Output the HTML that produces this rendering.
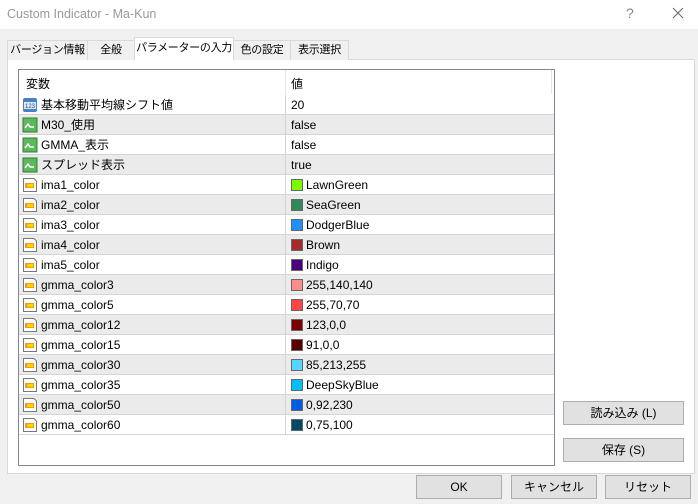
<!DOCTYPE html><html><head><meta charset="utf-8"><style>
*{margin:0;padding:0;box-sizing:border-box}
body{width:698px;height:504px;background:#f0f0f0;position:relative;overflow:hidden;font-family:"Liberation Sans","Noto Sans CJK JP",sans-serif;font-size:12px;color:#000}
.title{position:absolute;left:0;top:0;width:698px;height:29px;background:#fff}
.title span{position:absolute;left:7px;top:7px;color:#999;font-size:12.5px}
.abs{position:absolute}
.tab{position:absolute;top:40px;height:20px;background:#f0f0f0;border:1px solid #d9d9d9;border-bottom:none;font-size:11px;text-align:center;line-height:18px;white-space:nowrap;overflow:hidden;letter-spacing:-0.3px}
.panel{position:absolute;left:7px;top:59px;width:688px;height:415px;background:#fff;border:1px solid #d9d9d9}
.list{position:absolute;left:18px;top:69px;width:537px;height:397px;border:1px solid #828790;background:#fff;overflow:hidden}
.row{position:absolute;left:0;width:535px;height:20px;border-bottom:1px solid #d4d4d4;line-height:20px;white-space:nowrap}
.row.g{background:#ebebeb}
.row .n{position:absolute;left:22px;top:0;height:20px;line-height:20px}
.row .v{position:absolute;left:272px;top:0;line-height:20px}
.row .d{position:absolute;left:266px;top:0;width:1px;height:20px;background:#d4d4d4}
.sw{position:absolute;left:272px;top:4px;width:12px;height:12px;border:1px solid #666}
.row .vc{position:absolute;left:287px;top:0;line-height:20px}
.ic{position:absolute;left:3px;top:2px;width:16px;height:16px}
.btn{position:absolute;background:#e1e1e1;border:1px solid #adadad;text-align:center;line-height:22px;font-size:12px;white-space:nowrap}
</style></head><body>
<div class="title"><span>Custom Indicator - Ma-Kun</span>
<span style="left:626px;top:5px;color:#888;font-size:14px">?</span>
<svg class="abs" style="left:672px;top:7px" width="12" height="12"><path d="M1 1L11 11M11 1L1 11" stroke="#666" stroke-width="1"/></svg></div>
<div class="panel"></div>
<div class="tab" style="left:7px;width:81px">バージョン情報</div>
<div class="tab" style="left:87px;width:48px">全般</div>
<div class="tab" style="left:134px;top:37px;height:23px;width:100px;background:#fff;line-height:20px;z-index:2">パラメーターの入力</div>
<div class="tab" style="left:233px;width:58px">色の設定</div>
<div class="tab" style="left:290px;width:59px">表示選択</div>
<div class="list">
<div class="row" style="top:0;height:25px;border:none;line-height:25px"><span class="abs" style="left:7px;top:2px">変数</span><span class="abs" style="left:272px;top:2px">値</span><div class="abs" style="left:266px;top:0;width:1px;height:25px;background:#e5e5e5"></div><div class="abs" style="left:532px;top:0;width:1px;height:24px;background:#e5e5e5"></div></div>
<div id="rows"></div>
</div>
<div class="btn" style="left:563px;top:401px;width:121px;height:24px">読み込み (L)</div>
<div class="btn" style="left:563px;top:438px;width:121px;height:24px">保存 (S)</div>
<div class="btn" style="left:416px;top:475px;width:86px;height:24px">OK</div>
<div class="btn" style="left:511px;top:475px;width:86px;height:24px">キャンセル</div>
<div class="btn" style="left:605px;top:475px;width:86px;height:24px">リセット</div>
<script>
var R=[["n","基本移動平均線シフト値","20"],["b","M30_使用","false"],["b","GMMA_表示","false"],["b","スプレッド表示","true"],
["c","ima1_color","LawnGreen","#7cfc00"],["c","ima2_color","SeaGreen","#2e8b57"],["c","ima3_color","DodgerBlue","#1e90ff"],["c","ima4_color","Brown","#a52a2a"],["c","ima5_color","Indigo","#4b0082"],
["c","gmma_color3","255,140,140","#ff8c8c"],["c","gmma_color5","255,70,70","#ff4646"],["c","gmma_color12","123,0,0","#7b0000"],["c","gmma_color15","91,0,0","#5b0000"],["c","gmma_color30","85,213,255","#55d5ff"],["c","gmma_color35","DeepSkyBlue","#00bfff"],["c","gmma_color50","0,92,230","#005ce6"],["c","gmma_color60","0,75,100","#004b64"]];
var ic={n:'<svg class="ic" viewBox="0 0 16 16"><rect x="1" y="1" width="14" height="14" rx="2" fill="#4a7fc1"/><rect x="2" y="5" width="12" height="7" fill="#dbe8f7"/><text x="8" y="11" font-size="6" text-anchor="middle" fill="#1d4c8c" font-family="Liberation Sans">123</text></svg>',
b:'<svg class="ic" viewBox="0 0 16 16"><rect x="1" y="1" width="14" height="14" fill="#5cb85c" stroke="#2f7d2f"/><path d="M3 11L6 7L8 10L12 10" stroke="#fff" stroke-width="1.5" fill="none"/></svg>',
c:'<svg class="ic" viewBox="0 0 16 16"><path d="M1.5 1.5H12L14.5 4V14.5H1.5Z" fill="#fff" stroke="#777"/><rect x="3" y="6" width="9" height="5" fill="#ff9900"/><rect x="5" y="7" width="6" height="3" fill="#ffd200"/></svg>'};
var h="";R.forEach(function(r,i){var t=25+i*20;h+='<div class="row'+(i%2?" g":"")+'" style="top:'+t+'px">'+ic[r[0]]+'<span class="n">'+r[1]+'</span><div class="d"></div>'+(r[0]=="c"?'<div class="sw" style="background:'+r[3]+'"></div><span class="vc">'+r[2]+'</span>':'<span class="v">'+r[2]+'</span>')+'</div>';});
document.getElementById("rows").innerHTML=h;
</script>
</body></html>
